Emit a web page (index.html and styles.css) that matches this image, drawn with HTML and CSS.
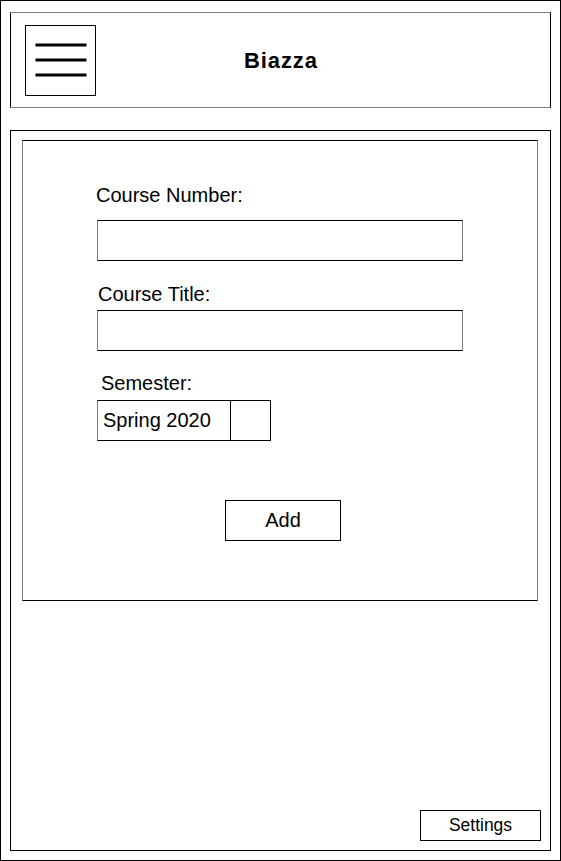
FILE: index.html
```html
<!DOCTYPE html>
<html>
<head>
<meta charset="utf-8">
<title>Biazza</title>
<link rel="stylesheet" href="styles.css">
</head>
<body>
<div class="frame">
  <header class="header">
    <div class="menu-btn">
      <svg class="menu-icon" width="69" height="69" viewBox="0 0 69 69">
        <line x1="9.5" y1="19" x2="60.5" y2="19" stroke="#000" stroke-width="3"/>
        <line x1="9.5" y1="34" x2="60.5" y2="34" stroke="#000" stroke-width="3"/>
        <line x1="9.5" y1="49" x2="60.5" y2="49" stroke="#000" stroke-width="3"/>
      </svg>
    </div>
    <div class="title">Biazza</div>
    <div></div>
  </header>
  <main class="main">
    <section class="card">
      <div class="label label-number">Course Number:</div>
      <input class="field field-first" type="text">
      <div class="label label-title">Course Title:</div>
      <input class="field field-second" type="text">
      <div class="label label-semester">Semester:</div>
      <div class="select">
        <div class="select-value">Spring 2020</div>
        <div class="select-arrow"></div>
      </div>
      <button class="add-btn">Add</button>
    </section>
    <button class="settings-btn">Settings</button>
  </main>
</div>
</body>
</html>
```
FILE: styles.css
```css
body {
  margin: 0;
  font-family: "Liberation Sans", Arial, sans-serif;
  color: #000;
  background: #fff;
}

.frame {
  width: 561px;
  height: 861px;
  box-sizing: border-box;
  border: 1px solid #000;
  padding: 11px 9px 9px 9px;
  display: flex;
  flex-direction: column;
  gap: 22px;
}

.header {
  height: 96px;
  flex: none;
  box-sizing: border-box;
  border: 1px solid #000;
  border-top-color: #808080;
  border-bottom-color: #808080;
  display: grid;
  grid-template-columns: 1fr auto 1fr;
  align-items: start;
}

.menu-btn {
  width: 71px;
  height: 71px;
  box-sizing: border-box;
  border: 1px solid #000;
  margin: 12px 0 0 14px;
  justify-self: start;
}

.menu-icon {
  display: block;
}

.title {
  font-size: 22px;
  line-height: 25px;
  font-weight: bold;
  letter-spacing: 0.9px;
  margin-right: -0.9px;
  margin-top: 35px;
}

.main {
  flex: 1;
  box-sizing: border-box;
  border: 1px solid #000;
  padding: 9px 12px 9px 11px;
  display: flex;
  flex-direction: column;
}

.card {
  height: 461px;
  box-sizing: border-box;
  border: 1px solid #000;
  border-left-color: #808080;
  border-right-color: #808080;
  padding: 43px 0 0 74px;
  display: flex;
  flex-direction: column;
  align-items: flex-start;
}

.label {
  font-size: 20px;
  line-height: 23px;
}

.label-number {
  margin-left: -1px;
}

.label-title {
  margin-left: 1px;
  margin-top: 22px;
}

.label-semester {
  margin-left: 4px;
  margin-top: 21px;
}

.field {
  display: block;
  width: 366px;
  height: 41px;
  box-sizing: border-box;
  margin: 0;
  padding: 0 4px;
  border: 1px solid #000;
  border-left-color: #808080;
  border-right-color: #808080;
  border-radius: 0;
  background: #fff;
  font: 20px "Liberation Sans", Arial, sans-serif;
  outline: none;
}

.field-first {
  margin-top: 13px;
}

.field-second {
  margin-top: 4px;
}

.select {
  margin-top: 5px;
  display: flex;
  width: 174px;
  height: 41px;
  box-sizing: border-box;
  border: 1px solid #000;
  border-left-color: #808080;
}

.select-value {
  width: 133px;
  box-sizing: border-box;
  border-right: 1px solid #000;
  padding-left: 5px;
  display: flex;
  align-items: center;
  font-size: 20px;
}

.select-arrow {
  flex: 1;
}

.add-btn {
  margin: 59px 0 0 128px;
  width: 116px;
  height: 41px;
  box-sizing: border-box;
  border: 1px solid #000;
  border-radius: 0;
  background: #fff;
  padding: 0;
  font: 20px "Liberation Sans", Arial, sans-serif;
  color: #000;
}

.settings-btn {
  margin-top: auto;
  margin-right: -3px;
  align-self: flex-end;
  width: 121px;
  height: 31px;
  box-sizing: border-box;
  border: 1px solid #000;
  border-radius: 0;
  background: #fff;
  padding: 0;
  font: 17.5px "Liberation Sans", Arial, sans-serif;
  color: #000;
}
```
